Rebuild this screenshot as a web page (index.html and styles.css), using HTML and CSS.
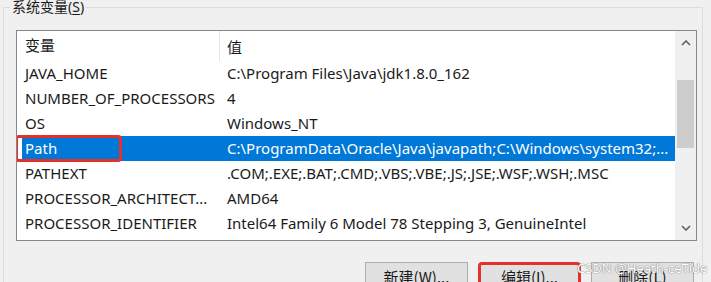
FILE: index.html
```html
<!DOCTYPE html>
<html lang="zh-CN">
<head>
  <meta charset="UTF-8" />
  <title>系统变量</title>
  <link rel="stylesheet" href="styles.css">
</head>
<body>

  <fieldset class="var-group">
    <legend>系统变量(<u>S</u>)</legend>

    <div class="list-view">
      <div class="list-body">
        <div class="list-header">
          <div class="col-name">变量</div>
          <div class="col-value">值</div>
        </div>
        <div class="list-row">
          <div class="col-name">JAVA_HOME</div>
          <div class="col-value">C:\Program Files\Java\jdk1.8.0_162</div>
        </div>
        <div class="list-row">
          <div class="col-name">NUMBER_OF_PROCESSORS</div>
          <div class="col-value">4</div>
        </div>
        <div class="list-row">
          <div class="col-name">OS</div>
          <div class="col-value">Windows_NT</div>
        </div>
        <div class="list-row selected">
          <span class="mark"></span>
          <div class="col-name">Path</div>
          <div class="col-value">C:\ProgramData\Oracle\Java\javapath;C:\Windows\system32;...</div>
        </div>
        <div class="list-row">
          <div class="col-name">PATHEXT</div>
          <div class="col-value">.COM;.EXE;.BAT;.CMD;.VBS;.VBE;.JS;.JSE;.WSF;.WSH;.MSC</div>
        </div>
        <div class="list-row">
          <div class="col-name">PROCESSOR_ARCHITECT...</div>
          <div class="col-value">AMD64</div>
        </div>
        <div class="list-row">
          <div class="col-name">PROCESSOR_IDENTIFIER</div>
          <div class="col-value">Intel64 Family 6 Model 78 Stepping 3, GenuineIntel</div>
        </div>
      </div>

      <div class="scrollbar">
        <div class="scroll-btn">
          <svg width="10" height="6" viewBox="0 0 10 6"><path d="M1 5 L5 1 L9 5" fill="none" stroke="#606060" stroke-width="1.6"/></svg>
        </div>
        <div class="scroll-track">
          <div class="scroll-thumb"></div>
        </div>
        <div class="scroll-btn">
          <svg width="10" height="6" viewBox="0 0 10 6"><path d="M1 1 L5 5 L9 1" fill="none" stroke="#606060" stroke-width="1.6"/></svg>
        </div>
      </div>
    </div>

    <div class="group-actions">
      <button>新建(<u>W</u>)...</button>
      <button class="marked">编辑(<u>I</u>)...</button>
      <button>删除(<u>L</u>)</button>
    </div>
  </fieldset>

  <div class="watermark">CSDN @Heath-ceTide</div>

</body>
</html>
```

FILE: styles.css
```css
* {
  box-sizing: border-box;
  margin: 0;
  padding: 0;
}

body {
  font-family: 'Noto Sans', 'Noto Sans CJK SC', sans-serif;
  font-size: 15px;
  color: #1a1a1a;
  background-color: #f0f0f0;
  width: 711px;
  height: 282px;
  overflow: hidden;
  position: relative;
}

u {
  text-decoration: underline;
  text-underline-offset: 2px;
}

.var-group {
  margin: -2px 0 0 3px;
  width: 700px;
  height: 320px;
  border: 1px solid #dcdcdc;
  padding: 0 0 0 12px;
}

.var-group legend {
  margin-left: -6px;
  padding: 0 2px;
  font-size: 14px;
  line-height: 18px;
  color: #1a1a1a;
}

/* list view */
.list-view {
  margin-top: 14px;
  width: 681px;
  height: 211px;
  background: #ffffff;
  border: 1px solid #828790;
  display: flex;
  overflow: hidden;
}

.list-body {
  flex: 1;
  display: flex;
  flex-direction: column;
}

.list-header {
  height: 30px;
  display: flex;
  align-items: center;
  margin-left: 5px;
}

.list-header .col-name {
  border-right: 1px solid #e5e5e5;
  height: 30px;
  line-height: 28px;
}

.list-row {
  height: 25px;
  margin-left: 5px;
  padding-bottom: 2px;
  display: flex;
  align-items: center;
  position: relative;
}

.col-name {
  width: 198px;
  padding-left: 3px;
  white-space: nowrap;
}

.col-value {
  padding-left: 7px;
  white-space: nowrap;
}

.list-row.selected {
  background-color: #0078d7;
  color: #ffffff;
}

.list-row .mark {
  position: absolute;
  left: -7px;
  top: -1px;
  width: 107px;
  height: 27px;
  border: 3px solid #e3312b;
  border-radius: 4px;
}

/* scrollbar */
.scrollbar {
  width: 21px;
  background: #f0f0f0;
  display: flex;
  flex-direction: column;
}

.scroll-btn {
  height: 24px;
  display: flex;
  align-items: center;
  justify-content: center;
}

.scroll-track {
  flex: 1;
  padding-top: 25px;
}

.scroll-thumb {
  margin: 0 2px;
  height: 68px;
  background: #cdcdcd;
}

/* buttons */
.group-actions {
  margin-top: 21px;
  padding-left: 349px;
  display: flex;
  gap: 10px;
}

.group-actions button {
  width: 103px;
  height: 30px;
  font-family: 'Noto Sans CJK SC', sans-serif;
  font-size: 15px;
  line-height: 20px;
  padding-top: 0;
  color: #1a1a1a;
  background: #e1e1e1;
  border: 1px solid #adadad;
  align-self: flex-start;
}

.group-actions button.marked {
  border: 3px solid #e3312b;
  border-radius: 4px;
}

.watermark {
  position: absolute;
  left: 577px;
  top: 259px;
  font-size: 13px;
  color: #ffffff;
  text-shadow: 0 0 1px #777, 0 0 1px #777;
  white-space: nowrap;
}
```
